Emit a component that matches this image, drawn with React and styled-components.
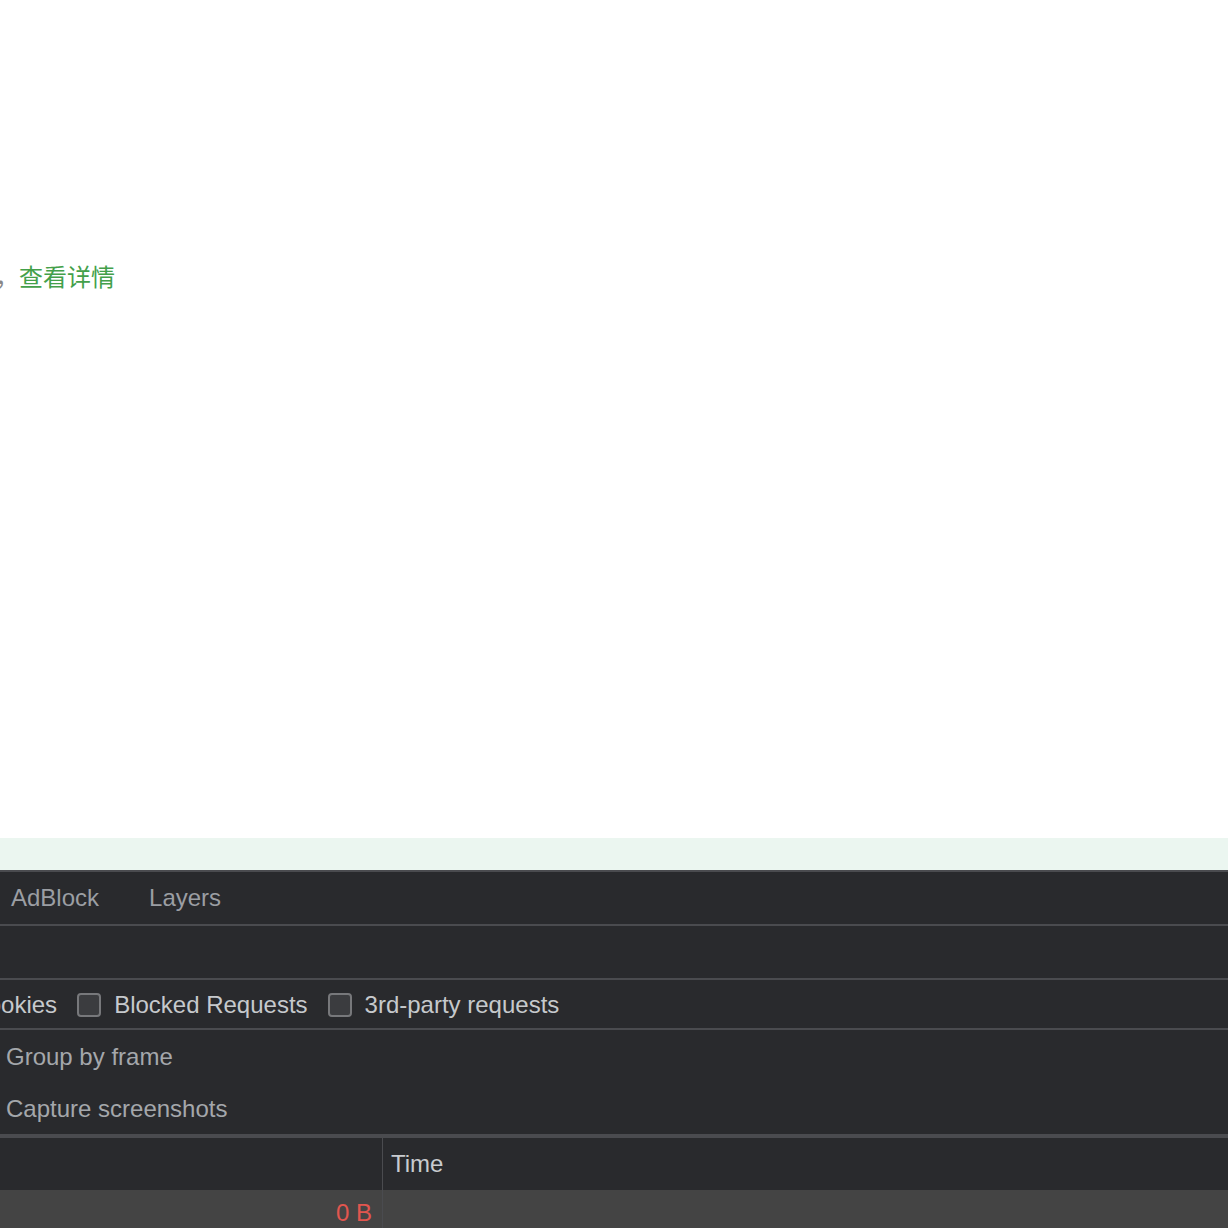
import React from "react";
import styled, { createGlobalStyle } from "styled-components";

const Global = createGlobalStyle`
  html, body { margin: 0; padding: 0; background: #ffffff; }
  body { font-family: "Liberation Sans", Arial, sans-serif; overflow: hidden; }
  #root { width: 1228px; height: 1228px; overflow: hidden; }
`;

const Page = styled.div`
  width: 1228px;
  height: 1228px;
  display: flex;
  flex-direction: column;
  overflow: hidden;
`;

const Content = styled.div`
  height: 838px;
  flex-shrink: 0;
  background: #ffffff;
  padding-top: 261px;
  box-sizing: border-box;
`;

const Notice = styled.div`
  font-family: "Noto Sans CJK SC", "Liberation Sans", sans-serif;
  font-size: 24px;
  line-height: 30px;
  margin-left: -5px;
  white-space: nowrap;
`;

const Punct = styled.span`
  color: #888888;
`;

const Link = styled.a`
  color: #43a04a;
  text-decoration: none;
`;

const Band = styled.div`
  height: 32px;
  flex-shrink: 0;
  background: #ebf6f0;
`;

const Devtools = styled.div`
  flex-shrink: 0;
  background: #292a2d;
  border-top: 2px solid #4a4b4f;
  display: flex;
  flex-direction: column;
  color: #c6c9cc;
  font-size: 24px;
`;

const Bar = styled.div`
  height: ${(p) => p.$h}px;
  border-bottom: 2px solid #4a4b4f;
  display: flex;
  align-items: center;
  white-space: nowrap;
  flex-shrink: 0;
  padding-top: ${(p) => p.$pt || 0}px;
  box-sizing: border-box;
`;

const Tab = styled.div`
  color: #9b9ea3;
  padding: 0 25px;
  &:first-child { padding-left: 11px; }
`;

const FilterItem = styled.label`
  display: flex;
  align-items: center;
  gap: 13px;
  margin-right: 20px;
  color: #c6c9cc;
  margin-left: ${(p) => p.$shift || 0}px;
`;

const Box = styled.span`
  width: 20px;
  height: 20px;
  border: 2px solid #77787b;
  border-radius: 4px;
  background: #3b3c3f;
  flex-shrink: 0;
`;

const Settings = styled.div`
  height: 108px;
  border-bottom: 4px solid #4a4b4f;
  box-sizing: border-box;
  display: flex;
  flex-direction: column;
  flex-shrink: 0;
`;

const SettingRow = styled.div`
  height: 52px;
  display: flex;
  align-items: center;
  padding-left: 6px;
  padding-top: 2px;
  box-sizing: border-box;
  color: #a4a7ab;
`;

const Grid = styled.div`
  display: grid;
  grid-template-columns: 382px 1px 1fr;
  grid-template-rows: 52px 46px;
`;

const HeadCell = styled.div`
  display: flex;
  align-items: center;
  padding-left: 8px;
  color: #c8cbcf;
`;

const Divider = styled.div`
  grid-row: 1 / span 2;
  grid-column: 2;
  background: #4a4b4f;
`;

const DataCell = styled.div`
  background: #444444;
  display: flex;
  align-items: center;
  justify-content: flex-end;
  padding-right: 10px;
  color: #e2564f;
  grid-row: 2;
  grid-column: ${(p) => p.$col};
`;

export default function App() {
  return (
    <Page>
      <Global />
      <Content>
        <Notice>
          <Punct>，</Punct>
          <Link href="#">查看详情</Link>
        </Notice>
      </Content>
      <Band />
      <Devtools>
        <Bar $h={54}>
          <Tab>AdBlock</Tab>
          <Tab>Layers</Tab>
        </Bar>
        <Bar $h={54} />
        <Bar $h={50} $pt={1}>
          <FilterItem $shift={-163}>Has blocked cookies</FilterItem>
          <FilterItem>
            <Box />
            Blocked Requests
          </FilterItem>
          <FilterItem>
            <Box />
            3rd-party requests
          </FilterItem>
        </Bar>
        <Settings>
          <SettingRow>Group by frame</SettingRow>
          <SettingRow>Capture screenshots</SettingRow>
        </Settings>
        <Grid>
          <HeadCell />
          <Divider />
          <HeadCell>Time</HeadCell>
          <DataCell $col={1}>0 B</DataCell>
          <DataCell $col={3} />
        </Grid>
      </Devtools>
    </Page>
  );
}
